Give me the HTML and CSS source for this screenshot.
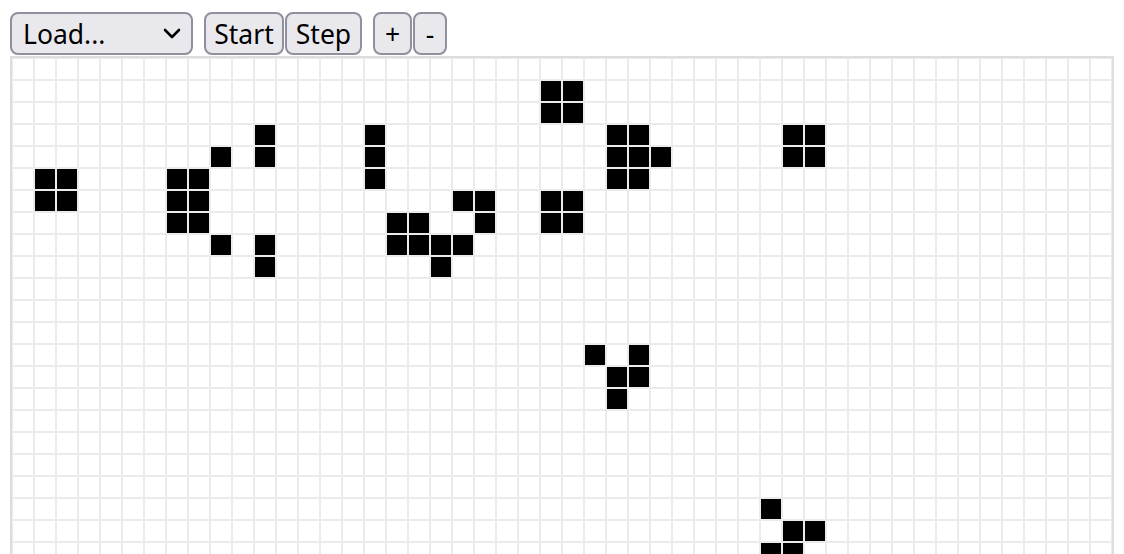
FILE: index.html
```html
<!DOCTYPE html>
<html lang="en">
<head>
<meta charset="utf-8">
<title>Life</title>
<link rel="stylesheet" href="styles.css">
</head>
<body>
<div class="controls">
  <label class="load">
    <select class="load-select">
      <option>Load...</option>
      <option>Glider</option>
      <option>Gosper gun</option>
    </select>
    <svg class="chev" width="18" height="11" viewBox="0 0 18 11"><path d="M2 2 L9 9 L16 2" fill="none" stroke="#000" stroke-width="2.6" stroke-linecap="round" stroke-linejoin="round"/></svg>
  </label>
  <div class="group">
    <button class="btn btn-start">Start</button>
    <button class="btn btn-step">Step</button>
  </div>
  <div class="group">
    <button class="btn btn-plus">+</button>
    <button class="btn btn-minus">-</button>
  </div>
</div>
<div class="board">
  <div class="cell" style="grid-column:2;grid-row:6"></div>
  <div class="cell" style="grid-column:3;grid-row:6"></div>
  <div class="cell" style="grid-column:2;grid-row:7"></div>
  <div class="cell" style="grid-column:3;grid-row:7"></div>

  <div class="cell" style="grid-column:12;grid-row:4"></div>
  <div class="cell" style="grid-column:10;grid-row:5"></div>
  <div class="cell" style="grid-column:12;grid-row:5"></div>
  <div class="cell" style="grid-column:8;grid-row:6"></div>
  <div class="cell" style="grid-column:9;grid-row:6"></div>
  <div class="cell" style="grid-column:8;grid-row:7"></div>
  <div class="cell" style="grid-column:9;grid-row:7"></div>
  <div class="cell" style="grid-column:8;grid-row:8"></div>
  <div class="cell" style="grid-column:9;grid-row:8"></div>
  <div class="cell" style="grid-column:10;grid-row:9"></div>
  <div class="cell" style="grid-column:12;grid-row:9"></div>
  <div class="cell" style="grid-column:12;grid-row:10"></div>

  <div class="cell" style="grid-column:17;grid-row:4"></div>
  <div class="cell" style="grid-column:17;grid-row:5"></div>
  <div class="cell" style="grid-column:17;grid-row:6"></div>

  <div class="cell" style="grid-column:21;grid-row:7"></div>
  <div class="cell" style="grid-column:22;grid-row:7"></div>
  <div class="cell" style="grid-column:18;grid-row:8"></div>
  <div class="cell" style="grid-column:19;grid-row:8"></div>
  <div class="cell" style="grid-column:22;grid-row:8"></div>
  <div class="cell" style="grid-column:18;grid-row:9"></div>
  <div class="cell" style="grid-column:19;grid-row:9"></div>
  <div class="cell" style="grid-column:20;grid-row:9"></div>
  <div class="cell" style="grid-column:21;grid-row:9"></div>
  <div class="cell" style="grid-column:20;grid-row:10"></div>

  <div class="cell" style="grid-column:25;grid-row:2"></div>
  <div class="cell" style="grid-column:26;grid-row:2"></div>
  <div class="cell" style="grid-column:25;grid-row:3"></div>
  <div class="cell" style="grid-column:26;grid-row:3"></div>

  <div class="cell" style="grid-column:25;grid-row:7"></div>
  <div class="cell" style="grid-column:26;grid-row:7"></div>
  <div class="cell" style="grid-column:25;grid-row:8"></div>
  <div class="cell" style="grid-column:26;grid-row:8"></div>

  <div class="cell" style="grid-column:28;grid-row:4"></div>
  <div class="cell" style="grid-column:29;grid-row:4"></div>
  <div class="cell" style="grid-column:28;grid-row:5"></div>
  <div class="cell" style="grid-column:29;grid-row:5"></div>
  <div class="cell" style="grid-column:30;grid-row:5"></div>
  <div class="cell" style="grid-column:28;grid-row:6"></div>
  <div class="cell" style="grid-column:29;grid-row:6"></div>

  <div class="cell" style="grid-column:36;grid-row:4"></div>
  <div class="cell" style="grid-column:37;grid-row:4"></div>
  <div class="cell" style="grid-column:36;grid-row:5"></div>
  <div class="cell" style="grid-column:37;grid-row:5"></div>

  <div class="cell" style="grid-column:27;grid-row:14"></div>
  <div class="cell" style="grid-column:29;grid-row:14"></div>
  <div class="cell" style="grid-column:28;grid-row:15"></div>
  <div class="cell" style="grid-column:29;grid-row:15"></div>
  <div class="cell" style="grid-column:28;grid-row:16"></div>

  <div class="cell" style="grid-column:35;grid-row:21"></div>
  <div class="cell" style="grid-column:36;grid-row:22"></div>
  <div class="cell" style="grid-column:37;grid-row:22"></div>
  <div class="cell" style="grid-column:35;grid-row:23"></div>
  <div class="cell" style="grid-column:36;grid-row:23"></div>
</div>
</body>
</html>
```
FILE: styles.css
```css
html, body {
  margin: 0;
  padding: 0;
  background: #fff;
}

body {
  padding: 12px 0 0 10px;
  font-family: "Noto Sans", "Open Sans", sans-serif;
}

.controls {
  display: flex;
  align-items: flex-start;
  height: 43px;
}

.group {
  display: flex;
  gap: 1px;
  margin-left: 11px;
}

.load {
  position: relative;
  display: block;
  width: 183px;
  height: 43px;
}

.load-select {
  appearance: none;
  -webkit-appearance: none;
  box-sizing: border-box;
  width: 183px;
  height: 43px;
  margin: 0;
  padding: 1px 0 0 11px;
  border: 2px solid #8f8f9d;
  border-radius: 8px;
  background: #e9e9ed;
  color: #000;
  font-family: "Noto Sans", "Open Sans", sans-serif;
  font-size: 26.5px;
  line-height: 38px;
}

.chev {
  position: absolute;
  left: 153px;
  top: 16px;
  pointer-events: none;
}

.btn {
  box-sizing: border-box;
  height: 43px;
  margin: 0;
  padding: 1px 0 0;
  border: 2px solid #8f8f9d;
  border-radius: 8px;
  background: #e9e9ed;
  color: #000;
  font-family: "Noto Sans", "Open Sans", sans-serif;
  font-size: 26.5px;
  line-height: 38px;
  text-align: center;
}

.btn-start { width: 80px; }
.btn-step { width: 77px; }
.btn-plus { width: 39px; }
.btn-minus { width: 34px; }

.board {
  display: grid;
  grid-template-columns: repeat(50, 22px);
  grid-template-rows: repeat(30, 22px);
  width: 1100px;
  margin-top: 1px;
  border: 2px solid #dddddd;
  background-color: #fff;
  background-image:
    linear-gradient(to right, #ebebeb 0 1px, transparent 1px 21px, #ebebeb 21px 22px),
    linear-gradient(to bottom, #ebebeb 0 1px, transparent 1px 21px, #ebebeb 21px 22px);
  background-size: 22px 22px;
}

.cell {
  margin: 1px;
  background: #000;
}
```
